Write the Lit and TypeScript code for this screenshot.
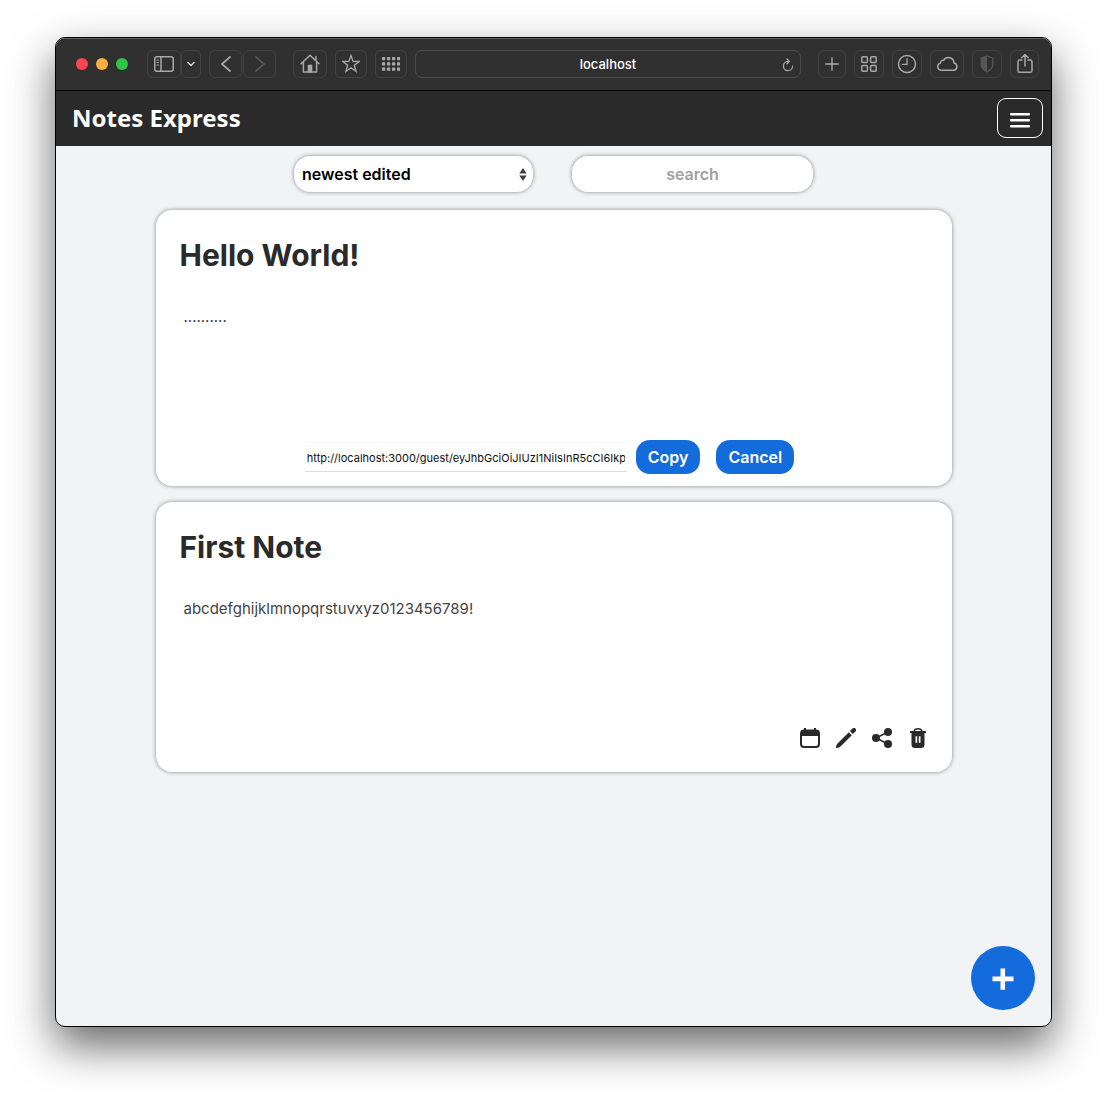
import { LitElement, html, css, svg } from "lit";
import { customElement, property, state } from "lit/decorators.js";

const ui = css`
  :host {
    box-sizing: border-box;
    font-family: Inter, "Liberation Sans", sans-serif;
  }
  *,
  *::before,
  *::after {
    box-sizing: border-box;
  }
  button,
  input,
  select {
    margin: 0;
    font-family: inherit;
  }
  button {
    padding: 0;
    cursor: pointer;
  }
  svg {
    display: block;
  }
`;

@customElement("browser-toolbar")
export class BrowserToolbar extends LitElement {
  static styles = [
    ui,
    css`
      :host {
        display: block;
      }
      .bar {
        display: flex;
        align-items: center;
        height: 53px;
        padding: 0 12px 0 20px;
        background: #303030;
        border-bottom: 1px solid #000;
        box-shadow: inset 0 1px 0 #606060;
        color: #a8a8a8;
      }
      .lights,
      .group {
        display: flex;
        gap: 8px;
      }
      .lights {
        margin-right: 19px;
      }
      .light {
        width: 12px;
        height: 12px;
        border: 0;
        border-radius: 50%;
      }
      .close {
        background: #fc4753;
      }
      .minimise {
        background: #fdae40;
      }
      .zoom {
        background: #30c446;
      }
      .joined {
        display: flex;
      }
      .history {
        gap: 1px;
      }
      .middle {
        margin-left: 17px;
      }
      .tool {
        display: grid;
        place-items: center;
        width: 30px;
        height: 28px;
        border: 1px solid #414141;
        border-radius: 6px;
        background: none;
        color: inherit;
      }
      .slim {
        width: 20px;
      }
      .small {
        width: 28px;
      }
      .mid {
        width: 32px;
      }
      .step {
        width: 33px;
      }
      .wide {
        width: 34px;
      }
      .last {
        width: 29px;
      }
      .dim {
        color: #565656;
      }
      .address {
        display: grid;
        grid-template-columns: 24px 1fr 24px;
        align-items: center;
        flex: 1;
        min-width: 80px;
        height: 28px;
        margin: 0 17px 0 8px;
        border: 1px solid #4a4a4a;
        border-radius: 7px;
      }
      .url {
        grid-column: 2;
        min-width: 0;
        width: 100%;
        padding: 0;
        border: 0;
        outline: 0;
        background: none;
        color: #fff;
        font-size: 13px;
        font-weight: 500;
        text-align: center;
      }
      .reload {
        display: grid;
        place-items: center;
        padding-top: 2px;
        border: 0;
        background: none;
        color: inherit;
      }
    `,
  ];

  private tool(label: string, cls: string, w: number, h: number, art: unknown) {
    return html`<button class="tool ${cls}" aria-label=${label}>
      <svg width=${w} height=${h} viewBox="0 0 ${w} ${h}" fill="none" stroke="currentColor" stroke-width="1.5" stroke-linecap="round" stroke-linejoin="round">
        ${art}
      </svg>
    </button>`;
  }

  render() {
    const dots = [0, 1, 2].flatMap((r) =>
      [0, 1, 2, 3].map(
        (c) => svg`<rect x=${c * 5} y=${r * 5.3} width="3.2" height="3.2" rx="0.6" fill="currentColor" stroke="none" />`,
      ),
    );
    return html`
      <div class="bar">
        <div class="lights">
          <button class="light close" aria-label="Close"></button>
          <button class="light minimise" aria-label="Minimise"></button>
          <button class="light zoom" aria-label="Zoom"></button>
        </div>
        <div class="group">
          <div class="joined">
            ${this.tool("Sidebar", "wide", 20, 16, svg`<rect x="0.8" y="0.8" width="18.4" height="14.4" rx="2" /><path d="M7 1v14" /><path d="M3 4h1.6M3 6.5h1.6M3 9h1.6" stroke-width="1.1" />`)}
            ${this.tool("Tab groups", "slim", 8, 6, svg`<path d="M1 1.5l3 3 3-3" stroke="#d0d0d0" />`)}
          </div>
          <div class="joined history">
            ${this.tool("Back", "step", 10, 16, svg`<path d="M9 1L1 8 9 15" stroke-width="1.7" />`)}
            ${this.tool("Forward", "step dim", 10, 16, svg`<path d="M1 1l8 7L1 15" stroke-width="1.7" />`)}
          </div>
        </div>
        <div class="group middle">
          ${this.tool("Home", "wide", 20, 20, svg`<path d="M1 9.800L10 1.200l9 8.600M3.400 8v10h13.200V8M15.900 6.200V2.600" /><path d="M8 18v-7h4v7z" fill="currentColor" stroke-width="0.6" />`)}
          ${this.tool("Favourites", "mid", 18, 20, svg`<path d="M9 1.500l2.100 5.900 6.200.1-5 3.800 1.800 6L9 13.700l-5.100 3.600 1.800-6-5-3.800 6.200-.1z" stroke-width="1.3" stroke-linejoin="miter" />`)}
          ${this.tool("Top sites", "mid", 18, 14, dots)}
        </div>
        <div class="address">
          <input class="url" type="text" aria-label="Address" value="localhost" />
          <button class="reload" aria-label="Reload">
            <svg width="12" height="14" viewBox="0 0 12 14" fill="none" stroke="currentColor" stroke-width="1.3" stroke-linecap="round" stroke-linejoin="round">
              <path d="M6.800 3.400H6a4.600 4.600 0 1 0 4.600 4.800M5 1l2.400 2.400L5 5.800" />
            </svg>
          </button>
        </div>
        <div class="group">
          ${this.tool("New tab", "small", 14, 14, svg`<path d="M7 .8v12.4M.8 7h12.4" stroke-width="1.4" />`)}
          ${this.tool("Tab overview", "", 16, 16, svg`<rect x="0.8" y="0.8" width="5.6" height="5.6" rx="1" /><rect x="9.6" y="0.8" width="5.6" height="5.6" rx="1" /><rect x="0.8" y="9.6" width="5.6" height="5.6" rx="1" /><rect x="9.6" y="9.6" width="5.6" height="5.6" rx="1" />`)}
          ${this.tool("History", "", 20, 20, svg`<circle cx="10" cy="10" r="8.5" /><path d="M10 4.6V10.4H5.4" stroke-width="1.3" />`)}
          ${this.tool("iCloud tabs", "wide", 22, 16, svg`<path d="M5 14.3h12.500a3.700 3.700 0 0 0 .5-7.300A5.600 5.600 0 0 0 7.600 4.300 3 3 0 0 0 4.300 7.100 3.700 3.700 0 0 0 5 14.300z" />`)}
          ${this.tool("Privacy report", "dim", 14, 18, svg`<path d="M7 1l5.800 2v6.600c0 3.200-2.600 5.600-5.800 7.200-3.200-1.600-5.800-4-5.800-7.200V3z" stroke-width="1.3" /><path d="M7 1v15.800c-3.200-1.600-5.800-4-5.800-7.200V3z" fill="currentColor" stroke="none" />`)}
          ${this.tool("Share", "last", 16, 20, svg`<path d="M5 6.100H2.600A1.600 1.600 0 0 0 1 7.700v9a1.600 1.600 0 0 0 1.600 1.600h10.800a1.600 1.600 0 0 0 1.600-1.600v-9a1.600 1.600 0 0 0-1.600-1.600H11M8 12V.8M4.800 3.700L8 .6l3.200 3.100" />`)}
        </div>
      </div>
    `;
  }
}

@customElement("note-card")
export class NoteCard extends LitElement {
  static styles = [
    ui,
    css`
      :host {
        display: block;
      }
      .card {
        background: #fff;
        border-radius: 16px;
        box-shadow: 0 0 4px rgba(0, 0, 0, 0.45);
        color: #2a2a2a;
      }
      .content {
        min-height: 218px;
        padding: 24px 24px 0;
      }
      .title {
        margin: 0 0 29px;
        font-size: 30px;
        line-height: 42px;
        font-weight: 700;
      }
      .text {
        margin: 0;
        padding: 0 4px;
        font-size: 15px;
        line-height: 24px;
        color: #444;
        overflow-wrap: anywhere;
      }
      .actions {
        display: flex;
        justify-content: flex-end;
        padding: 0 16px 16px;
      }
      .action {
        display: grid;
        place-items: center;
        width: 36px;
        height: 36px;
        border: 0;
        background: none;
        color: inherit;
      }
      .share {
        display: flex;
        justify-content: center;
        align-items: center;
        padding: 12px 8px 12px 0;
      }
      .link {
        width: 322px;
        min-width: 0;
        height: 30px;
        margin-right: 9px;
        padding: 2px 2px 0;
        border: 1px solid #f6f6f6;
        border-width: 1px 0;
        border-bottom-color: #dcdcdc;
        outline: 0;
        color: #111;
        font-size: 11px;
      }
      .pill {
        height: 34px;
        padding: 0 12px;
        border: 0;
        border-radius: 14px;
        background: #146bdb;
        color: #fff;
        font-size: 16px;
        font-weight: 600;
      }
      .pill + .pill {
        margin-left: 16px;
      }
    `,
  ];

  @property() heading = "";
  @property() text = "";
  @property() link = "";

  private share() {
    return html`<form class="share" @submit=${(e: Event) => e.preventDefault()}>
      <input class="link" type="text" aria-label="Guest link" readonly .value=${this.link} />
      <button class="pill" type="button">Copy</button>
      <button class="pill" type="button">Cancel</button>
    </form>`;
  }

  private actions() {
    return html`<div class="actions">
      <button class="action" aria-label="Date">
        <svg width="20" height="20" viewBox="0 0 20 20" fill="currentColor">
          <path fill-rule="evenodd" d="M4 0h2v1.500h8V0h2v1.500a4 4 0 0 1 4 4V16a4 4 0 0 1-4 4H4a4 4 0 0 1-4-4V5.500a4 4 0 0 1 4-4zM2 8v8a2 2 0 0 0 2 2h12a2 2 0 0 0 2-2V8z" />
        </svg>
      </button>
      <button class="action" aria-label="Edit">
        <svg width="20" height="20" viewBox="0 0 20 20" fill="currentColor">
          <path d="M12.800 4.200l3 3L5 18c-1.200 1.200-2.500 2-5 2 0-2.500.800-3.800 2-5z" />
          <path d="M13.900 3.100L16.500.6a2 2 0 0 1 2.900 2.900L16.900 6.100z" />
        </svg>
      </button>
      <button class="action" aria-label="Share">
        <svg width="20" height="20" viewBox="0 0 20 20" fill="currentColor">
          <path d="M16 4L4 10l12 6" fill="none" stroke="currentColor" stroke-width="1.5" />
          <circle cx="16" cy="4" r="4" /><circle cx="4" cy="10" r="4" /><circle cx="16" cy="16" r="4" />
        </svg>
      </button>
      <button class="action" aria-label="Delete">
        <svg width="16" height="20" viewBox="0 0 16 20" fill="currentColor">
          <path d="M4 3.500C4.300 1.600 5.700.8 8 .8s3.700.8 4 2.700" fill="none" stroke="currentColor" stroke-width="1.5" />
          <rect y="3" width="16" height="2" rx="0.5" />
          <path fill-rule="evenodd" d="M1.500 4h13v12.500A3.500 3.500 0 0 1 11 20H5a3.500 3.500 0 0 1-3.500-3.500zM5.500 8.200v6.600h1.700V8.200zm3.300 0v6.600h1.700V8.200z" />
        </svg>
      </button>
    </div>`;
  }

  render() {
    return html`<article class="card">
      <div class="content">
        <h2 class="title">${this.heading}</h2>
        <p class="text">${this.text}</p>
      </div>
      ${this.link ? this.share() : this.actions()}
    </article>`;
  }
}

interface Note {
  heading: string;
  text: string;
  link?: string;
}

@customElement("app-root")
export class AppRoot extends LitElement {
  static styles = [
    ui,
    css`
      :host {
        display: flex;
        min-height: 100vh;
        padding: 37px 55px 73px;
        background: #fff;
      }
      .window {
        position: relative;
        display: flex;
        flex-direction: column;
        flex: 1;
        min-width: 0;
        overflow: hidden;
        border: 1px solid #000;
        border-radius: 10px;
        background: #f2f3f5;
        box-shadow: 0 19px 44px rgba(0, 0, 0, 0.6);
      }
      .header {
        display: flex;
        align-items: center;
        justify-content: space-between;
        height: 55px;
        padding: 0 8px 1px 16px;
        background: #2a2a2a;
      }
      .brand {
        margin: 0;
        color: #fff;
        font-family: "Noto Sans", "Open Sans", sans-serif;
        font-size: 24px;
        line-height: 32px;
        font-weight: 700;
      }
      .menu {
        display: grid;
        place-items: center;
        width: 46px;
        height: 40px;
        border: 1px solid #fff;
        border-radius: 9px;
        background: none;
        color: #fff;
      }
      .filters {
        display: flex;
        justify-content: center;
        gap: 39px;
        padding: 10px 16px 18px;
      }
      .sort {
        position: relative;
        width: 239px;
      }
      .field {
        width: 100%;
        height: 36px;
        padding: 0 8px;
        border: 0;
        border-radius: 16px;
        outline: 0;
        background: #fff;
        box-shadow: 0 0 4px rgba(0, 0, 0, 0.45);
        color: #000;
        font-size: 16px;
        font-weight: 600;
        appearance: none;
      }
      .search {
        width: 241px;
        text-align: center;
      }
      .search::placeholder {
        color: #a0a0a0;
        opacity: 1;
      }
      .arrows {
        position: absolute;
        top: 12px;
        right: 6px;
        pointer-events: none;
      }
      .notes {
        display: flex;
        flex-direction: column;
        gap: 16px;
        width: 80%;
        margin: 0 auto;
        padding-bottom: 16px;
      }
      .add {
        position: absolute;
        right: 16px;
        bottom: 16px;
        display: grid;
        place-items: center;
        width: 64px;
        height: 64px;
        padding-top: 2px;
        border: 0;
        border-radius: 50%;
        background: #146bdb;
        color: #fff;
      }
    `,
  ];

  @state() private notes: Note[] = [
    {
      heading: "Hello World!",
      text: "..........",
      link: "http://localhost:3000/guest/eyJhbGciOiJIUzI1NiIsInR5cCI6IkpXVCJ9",
    },
    { heading: "First Note", text: "abcdefghijklmnopqrstuvxyz0123456789!" },
  ];

  render() {
    return html`
      <div class="window">
        <browser-toolbar></browser-toolbar>
        <header class="header">
          <h1 class="brand">Notes Express</h1>
          <button class="menu" aria-label="Menu">
            <svg width="20" height="20" viewBox="0 0 20 20" fill="currentColor">
              <rect y="5" width="20" height="2.4" rx="1" /><rect y="11" width="20" height="2.4" rx="1" /><rect y="17" width="20" height="2.4" rx="1" />
            </svg>
          </button>
        </header>
        <main>
          <div class="filters">
            <div class="sort">
              <select class="field" aria-label="Sort notes">
                <option>newest edited</option>
                <option>oldest edited</option>
              </select>
              <svg class="arrows" width="8" height="13" viewBox="0 0 8 13" fill="#404040">
                <path d="M4 0l3.700 5.400H.3zM4 13L.3 7.600h7.400z" />
              </svg>
            </div>
            <input class="field search" type="text" placeholder="search" aria-label="Search notes" />
          </div>
          <section class="notes">
            ${this.notes.map((n) => html`<note-card .heading=${n.heading} .text=${n.text} .link=${n.link ?? ""}></note-card>`)}
          </section>
        </main>
        <button class="add" aria-label="Add note">
          <svg width="22" height="22" viewBox="0 0 22 22" fill="currentColor">
            <path d="M8.500 0.500h4.600v8h8.400v4.800h-8.400v8.400H8.500v-8.400H0.500V8.500h8z" />
          </svg>
        </button>
      </div>
    `;
  }
}
